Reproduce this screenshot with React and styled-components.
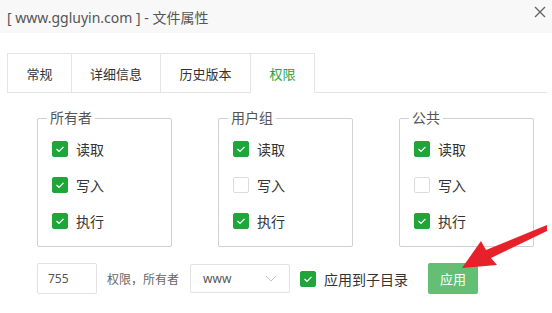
import React from "react";
import styled, { createGlobalStyle } from "styled-components";

const GlobalStyle = createGlobalStyle`
    html, body {
        margin: 0;
        padding: 0;
        background: #fff;
    }
    body {
        font-family: "Noto Sans", "Noto Sans CJK SC", sans-serif;
        color: #333;
    }
`

const Window = styled.div`
    position: relative;
    width: 552px;
    height: 313px;
    overflow: hidden;
    background: #fff;
`

const Header = styled.div`
    height: 33px;
    background: #f8f8f8;
    display: flex;
    align-items: center;
    justify-content: space-between;
    padding: 0 6px 0 7px;
    box-sizing: border-box;
    font-size: 14px;
    color: #555;
    .close{
        width: 12px;
        height: 12px;
        margin-bottom: 9px;
    }
`

const Body = styled.div`
    padding: 20px 5px 0 7px;
`

const Tabs = styled.div`
    display: flex;
    height: 40px;
    border-bottom: 1px solid #e4e4e4;
    box-sizing: border-box;
`

const Tab = styled.div`
    width: ${p => p.w}px;
    box-sizing: border-box;
    display: flex;
    align-items: center;
    justify-content: center;
    font-size: 13px;
    color: ${p => p.active ? "#20a53a" : "#333"};
    background: #fff;
    border: 1px solid #e4e4e4;
    border-left: ${p => p.first ? "1px solid #e4e4e4" : "none"};
    border-bottom: ${p => p.active ? "1px solid #fff" : "none"};
    height: ${p => p.active ? "40px" : "39px"};
`

const Groups = styled.div`
    display: flex;
    gap: 46px;
    padding: 25px 0 0 37px;
`

const Group = styled.div`
    position: relative;
    width: 135px;
    height: 129px;
    box-sizing: border-box;
    border: 1px solid #cfcfd4;
    border-radius: 2px;
    padding: 22px 0 0 14px;
    display: flex;
    flex-direction: column;
    gap: 20px;
`

const Legend = styled.span`
    position: absolute;
    top: -10px;
    left: 9px;
    padding: 0 3px;
    background: #fff;
    font-size: 14px;
    line-height: 18px;
    color: #555;
`

const CheckRow = styled.label`
    display: flex;
    align-items: center;
    gap: 8px;
    height: 16px;
    font-size: ${p => p.size || 14}px;
    color: #333;
`

const Box = styled.span`
    width: 16px;
    height: 16px;
    box-sizing: border-box;
    border-radius: 2px;
    flex-shrink: 0;
    display: flex;
    align-items: center;
    justify-content: center;
    background: ${p => p.checked ? "#20a53a" : "#fff"};
    border: 1px solid ${p => p.checked ? "#20a53a" : "#dcdcdc"};
`

const Footer = styled.div`
    display: flex;
    align-items: center;
    padding: 16px 0 0 37px;
`

const Input = styled.div`
    width: 60px;
    height: 31px;
    box-sizing: border-box;
    border: 1px solid #e2e2e2;
    border-radius: 2px;
    padding-left: 10px;
    display: flex;
    align-items: center;
    font-size: 12px;
    color: #555;
`

const Hint = styled.span`
    font-size: 12px;
    color: #666;
    margin: 0 11px 0 10px;
`

const Select = styled.div`
    width: 100px;
    height: 29px;
    box-sizing: border-box;
    border: 1px solid #e2e2e2;
    border-radius: 2px;
    padding: 0 12px 0 12px;
    display: flex;
    align-items: center;
    justify-content: space-between;
    font-size: 12px;
    color: #555;
    margin-right: 10px;
`

const Button = styled.button`
    margin-left: 20px;
    width: 50px;
    height: 31px;
    border: none;
    border-radius: 2px;
    background: #20a53a;
    opacity: .7;
    color: #fff;
    font-family: inherit;
    font-size: 13px;
    padding: 0;
`

const Overlay = styled.svg`
    position: absolute;
    top: 0;
    left: 0;
    pointer-events: none;
`

const Check = ({ checked }) => (
    <Box checked={checked}>
        {checked && (
            <svg width="10" height="8" viewBox="0 0 10 8">
                <path d="M1.5 4 L4 6.3 L8.5 1.8" fill="none" stroke="#fff" strokeWidth="1.2" />
            </svg>
        )}
    </Box>
)

const groups = [
    { name: "所有者", perms: [true, true, true] },
    { name: "用户组", perms: [true, false, true] },
    { name: "公共", perms: [true, false, true] },
]

const labels = ["读取", "写入", "执行"]

export default function App() {
    return (
        <Window>
            <GlobalStyle />
            <Header>
                <span>[ www.ggluyin.com ] - 文件属性</span>
                <svg className="close" viewBox="0 0 12 12">
                    <path d="M1 1 L11 11 M11 1 L1 11" stroke="#666" strokeWidth="1.4" />
                </svg>
            </Header>
            <Body>
                <Tabs>
                    <Tab w={65} first>常规</Tab>
                    <Tab w={89}>详细信息</Tab>
                    <Tab w={90}>历史版本</Tab>
                    <Tab w={64} active>权限</Tab>
                </Tabs>
            </Body>
            <Groups>
                {groups.map(g => (
                    <Group key={g.name}>
                        <Legend>{g.name}</Legend>
                        {labels.map((l, i) => (
                            <CheckRow key={l}>
                                <Check checked={g.perms[i]} />
                                {l}
                            </CheckRow>
                        ))}
                    </Group>
                ))}
            </Groups>
            <Footer>
                <Input>755</Input>
                <Hint>权限，所有者</Hint>
                <Select>
                    <span>www</span>
                    <svg width="12" height="7" viewBox="0 0 12 7">
                        <path d="M1 1 L6 6 L11 1" fill="none" stroke="#c8c8c8" strokeWidth="1" />
                    </svg>
                </Select>
                <CheckRow>
                    <Check checked />
                    应用到子目录
                </CheckRow>
                <Button>应用</Button>
            </Footer>
            <Overlay width="552" height="313" viewBox="0 0 552 313">
                <polygon
                    points="462,268 481,241 486,250 547,225 547,231 491,258 497,265"
                    fill="#e8202a"
                />
            </Overlay>
        </Window>
    )
}
